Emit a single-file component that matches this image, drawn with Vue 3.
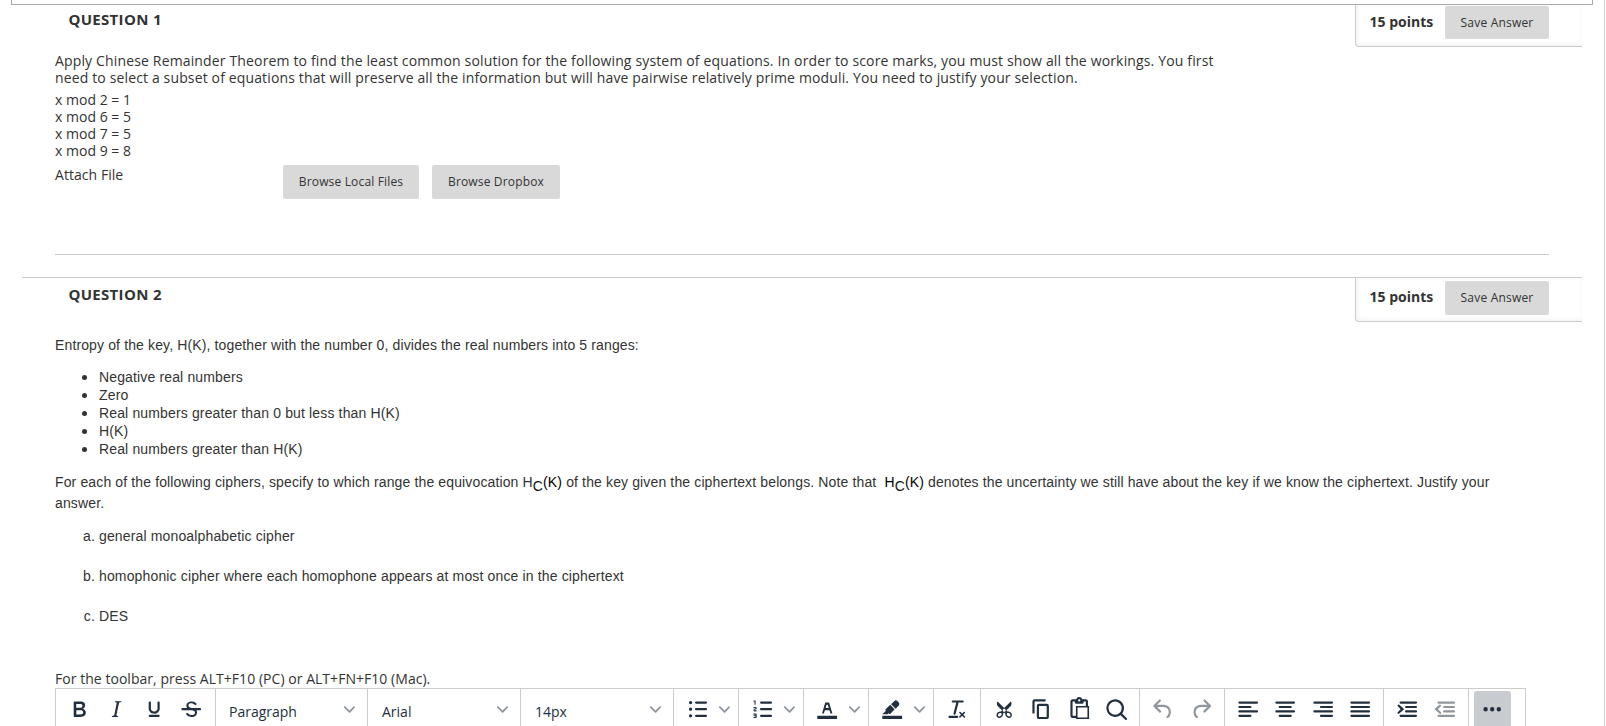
<script setup>
const ranges = ['Negative real numbers', 'Zero', 'Real numbers greater than 0 but less than H(K)', 'H(K)', 'Real numbers greater than H(K)']
const equations = ['x mod 2 = 1', 'x mod 6 = 5', 'x mod 7 = 5', 'x mod 9 = 8']
const ciphers = [
  ['a.', 'general monoalphabetic cipher'],
  ['b.', 'homophonic cipher where each homophone appears at most once in the ciphertext'],
  ['c.', 'DES'],
]

const bar = (x, y, w) => `M${x + 1} ${y}h${w - 2}a1 1 0 010 2h${2 - w}a1 1 0 010-2z`
const undo = 'M6.4 8H12c3.7 0 6.2 2 6.8 5.1.6 2.7-.4 5.6-2.3 6.8a1 1 0 01-1-1.8c1.1-.6 1.8-2.7 1.4-4.6-.5-2.1-2.1-3.5-4.9-3.5H6.4l3.3 3.3a1 1 0 11-1.4 1.4l-5-5a1 1 0 010-1.4l5-5a1 1 0 011.4 1.4L6.4 8z'
const icons = {
  bold: 'M7.8 19c-.3 0-.5 0-.6-.2l-.2-.5V5.7c0-.2 0-.4.2-.5l.6-.2h5c1.5 0 2.7.3 3.5 1 .7.6 1.1 1.4 1.1 2.5a3 3 0 01-.6 1.9c-.4.6-1 1-1.6 1.2.4.1.9.3 1.3.6s.8.7 1 1.2c.4.4.5 1 .5 1.6 0 1.3-.4 2.3-1.3 3-.8.7-2.1 1-3.8 1H7.8zm5-8.3c.6 0 1.2-.1 1.6-.5.4-.3.6-.7.6-1.3 0-1.1-.8-1.7-2.3-1.7H9.3v3.5h3.4zm.5 6c.7 0 1.3-.1 1.7-.4.4-.4.6-.9.6-1.5s-.2-1-.7-1.4c-.4-.3-1-.4-2-.4H9.4v3.8h4z',
  italic: 'M16.7 4.7l-.1.9h-.3c-.6 0-1 0-1.4.3-.3.3-.4.6-.5 1.1l-2.1 9.8v.6c0 .5.4.8 1.4.8h.2l-.2.8H8l.2-.8h.2c1.1 0 1.8-.5 2-1.5l2-9.8.1-.5c0-.6-.4-.8-1.4-.8h-.3l.2-.9h5.8z',
  underline: 'M16 5c.6 0 1 .4 1 1v5.5a4 4 0 01-.4 1.8l-1 1.4a5.3 5.3 0 01-5.5 1 5 5 0 01-1.6-1c-.5-.4-.8-.9-1.1-1.4a4 4 0 01-.4-1.8V6c0-.6.4-1 1-1s1 .4 1 1v5.5c0 .3 0 .6.2 1l.6.7a3.3 3.3 0 002.2.8 3.4 3.4 0 002.2-.8c.3-.2.4-.5.6-.8l.2-.9V6c0-.6.4-1 1-1zM8 17h8c.6 0 1 .4 1 1s-.4 1-1 1H8a1 1 0 010-2z',
  strike: 'M15.6 8.5c-.5-.7-1-1.1-1.3-1.3-.6-.4-1.3-.6-2-.6-2.7 0-2.8 1.7-2.8 2.1 0 1.6 1.8 2 3.2 2.3 4.4.9 4.6 2.8 4.6 3.9 0 1.4-.7 4.1-5 4.1A6.2 6.2 0 017 16.4l1.5-1.1c.4.6 1.6 2 3.7 2 1.6 0 2.5-.4 3-1.2.4-.8.3-2-.8-2.6-.7-.4-1.6-.7-2.9-1-1-.2-3.9-.8-3.9-3.6C7.6 6 10.3 5 12.4 5c2.9 0 4.2 1.6 4.7 2.4l-1.5 1.1z',
  bullets: bar(10, 5, 11) + bar(10, 11, 11) + bar(10, 17, 11) + 'M4.5 6a1.5 1.5 0 103 0 1.5 1.5 0 10-3 0zM4.5 12a1.5 1.5 0 103 0 1.5 1.5 0 10-3 0zM4.5 18a1.5 1.5 0 103 0 1.5 1.5 0 10-3 0z',
  numbers: bar(10, 5, 11) + bar(10, 11, 11) + bar(10, 17, 11) + 'M6 4v3.5c0 .3-.2.5-.5.5a.5.5 0 01-.5-.5V5h-.5a.5.5 0 010-1H6zm-1 8.8l.2.2h1.3c.3 0 .5.2.5.5s-.2.5-.5.5H4.9a1 1 0 01-.9-1V13c0-.4.3-.8.6-1l1.2-.4.2-.3a.2.2 0 00-.2-.2H4.5a.5.5 0 01-.5-.5c0-.3.2-.5.5-.5h1.6c.5 0 .9.4.9 1v.1c0 .4-.3.8-.6 1l-1.2.4-.2.3zM7 17v2c0 .6-.4 1-1 1H4.5a.5.5 0 010-1h1.2c.2 0 .3-.1.3-.3 0-.2-.1-.3-.3-.3H4.4a.4.4 0 110-.8h1.3c.2 0 .3-.1.3-.3 0-.2-.1-.3-.3-.3H4.5a.5.5 0 110-1H6c.6 0 1 .4 1 1z',
  color: 'M3 18h18v3H3zM8.7 16h-.8a.5.5 0 01-.5-.6l2.7-9c.1-.3.3-.4.5-.4h2.8c.2 0 .4.1.5.4l2.7 9a.5.5 0 01-.5.6h-.8a.5.5 0 01-.4-.4l-.7-2.2c0-.3-.3-.4-.5-.4h-3.4c-.2 0-.4.1-.5.4l-.7 2.2c0 .3-.2.4-.4.4zm2.6-7.6l-.6 2a.5.5 0 00.5.6h1.6a.5.5 0 00.5-.6l-.6-2c0-.3-.3-.4-.5-.4h-.4c-.2 0-.4.1-.5.4z',
  highlight: 'M3 18h18v3H3zM7.7 16.7H3l3.3-3.3-.7-.8L10.2 8l4 4.1-4 4.2c-.2.2-.6.2-.8 0l-.6-.7-1.1 1.1zm5-7.5L11 7.4l3-2.9a2 2 0 012.6 0L18 6c.7.7.7 2 0 2.7l-2.9 2.9-1.8-1.8z',
  clear: 'M13.2 6a1 1 0 010 .2l-2.6 10a1 1 0 01-1 .8h-.2a.8.8 0 01-.8-1l2.6-10H8a1 1 0 110-2h9a1 1 0 010 2h-3.8zM5 18h7a1 1 0 010 2H5a1 1 0 010-2zm13 1.5L16.5 18 15 19.5a.7.7 0 01-1-1l1.5-1.5-1.5-1.5a.7.7 0 011-1l1.5 1.5 1.5-1.5a.7.7 0 011 1L17.5 17l1.5 1.5a.7.7 0 01-1 1z',
  cut: 'M18 15c.6.7 1 1.4 1 2.3 0 .8-.2 1.5-.7 2l-.8.5-1 .2c-.4 0-.8 0-1.2-.3a3.9 3.9 0 01-2.1-2.2c-.2-.5-.3-1-.2-1.5l-1-1-1 1c0 .5 0 1-.2 1.5-.1.5-.4 1-.9 1.4-.3.4-.7.6-1.2.8l-1.2.3c-.4 0-.7 0-1-.2-.3 0-.6-.3-.8-.5-.5-.5-.8-1.2-.7-2 0-.9.4-1.6 1-2.2A3.7 3.7 0 018.6 14H9l1-1-4-4-.5-1a3.3 3.3 0 010-2c0-.4.3-.7.5-1l6 6 6-6 .5 1a3.3 3.3 0 010 2c0 .4-.3.7-.5 1l-4 4 1 1h.5c.4 0 .8 0 1.2.3.5.2.9.4 1.2.8zm-8.5 2.2l.1-.4v-.3-.4a1 1 0 00-.2-.5 1 1 0 00-.4-.2 1.6 1.6 0 00-.8 0 2.6 2.6 0 00-.8.3 2.5 2.5 0 00-.9 1.1l-.1.4v.7l.2.5.5.2h.7a2.5 2.5 0 00.8-.3 2.8 2.8 0 001-1zm2.5-2.8c.4 0 .7-.1 1-.4.3-.3.4-.6.4-1s-.1-.7-.4-1c-.3-.3-.6-.4-1-.4s-.7.1-1 .4c-.3.3-.4.6-.4 1s.1.7.4 1c.3.3.6.4 1 .4zm5.4 4l.2-.5v-.4-.3a2.6 2.6 0 00-.3-.8 2.4 2.4 0 00-.7-.7 2.5 2.5 0 00-.8-.3 1.5 1.5 0 00-.8 0 1 1 0 00-.4.2 1 1 0 00-.2.5 1.5 1.5 0 000 .7v.4l.3.4.3.4a2.8 2.8 0 00.8.5l.4.1h.7l.5-.2z',
  copy: 'M16 3H6a2 2 0 00-2 2v11h2V5h10V3zm1 4a2 2 0 012 2v10a2 2 0 01-2 2h-7a2 2 0 01-2-2V9c0-1.2.9-2 2-2h7zm0 12V9h-7v10h7z',
  paste: 'M18 9V5h-2v1c0 .6-.4 1-1 1H9a1 1 0 01-1-1V5H6v13h3V9h9zM9 20H6a2 2 0 01-2-2V5c0-1.1.9-2 2-2h3.2A3 3 0 0112 1a3 3 0 012.8 2H18a2 2 0 012 2v4h1v12H9v-1zm1.5-9.5v9h9v-9h-9zM12 3a1 1 0 00-1 1c0 .5.4 1 1 1s1-.5 1-1-.4-1-1-1z',
  search: 'M16 17.3a8 8 0 111.4-1.4l4.3 4.4a1 1 0 01-1.4 1.4l-4.4-4.3zm-5-.3a6 6 0 100-12 6 6 0 000 12z',
  undo,
  redo: undo,
  left: bar(3, 5, 18) + bar(3, 9, 12) + bar(3, 13, 18) + bar(3, 17, 12),
  center: bar(3, 5, 18) + bar(6, 9, 12) + bar(3, 13, 18) + bar(6, 17, 12),
  right: bar(3, 5, 18) + bar(9, 9, 12) + bar(3, 13, 18) + bar(9, 17, 12),
  justify: bar(3, 5, 18) + bar(3, 9, 18) + bar(3, 13, 18) + bar(3, 17, 18),
  indent: bar(5, 5, 16) + bar(10, 9, 11) + bar(10, 13, 11) + bar(5, 17, 16) + 'M3.3 14.8a1 1 0 001.2 1.4l4-3.4a1 1 0 000-1.6l-4-3.4a1 1 0 00-1.2 1.4L6 12z',
  outdent: bar(5, 5, 16) + bar(10, 9, 11) + bar(10, 13, 11) + bar(5, 17, 16) + 'M8.2 14.8a1 1 0 01-1.2 1.4l-4-3.4a1 1 0 010-1.6l4-3.4a1 1 0 011.2 1.4L5.4 12z',
  more: 'M4 12a2 2 0 104 0 2 2 0 10-4 0zM10 12a2 2 0 104 0 2 2 0 10-4 0zM16 12a2 2 0 104 0 2 2 0 10-4 0z',
}
const groups = [
  { kind: 'icons', names: ['bold', 'italic', 'underline', 'strike'] },
  { kind: 'select', label: 'Paragraph' },
  { kind: 'select', label: 'Arial' },
  { kind: 'select', label: '14px' },
  { kind: 'split', names: ['bullets'] },
  { kind: 'split', names: ['numbers'] },
  { kind: 'split', names: ['color'] },
  { kind: 'split', names: ['highlight'] },
  { kind: 'icons', names: ['clear'] },
  { kind: 'icons', names: ['cut', 'copy', 'paste', 'search'] },
  { kind: 'icons', names: ['undo', 'redo'] },
  { kind: 'icons', names: ['left', 'center', 'right', 'justify'] },
  { kind: 'icons', names: ['indent', 'outdent'] },
  { kind: 'icons', names: ['more'] },
]
const disabled = ['undo', 'redo', 'outdent']
</script>

<template>
  <main class="page">
    <div class="topbox"></div>
    <section class="question first">
      <header class="head">
        <h3>QUESTION 1</h3>
        <div class="points"><strong>15 points</strong><button class="btn save">Save Answer</button></div>
      </header>
      <div class="body">
        <p class="prompt"><span class="l1">Apply Chinese Remainder Theorem to find the least common solution for the following system of equations. In order to score marks, you must show all the workings. You first</span><br><span class="l2">need to select a subset of equations that will preserve all the information but will have pairwise relatively prime moduli. You need to justify your selection.</span></p>
        <div class="equations"><div v-for="e in equations" :key="e">{{ e }}</div></div>
        <div class="attach">
          <span class="label">Attach File</span>
          <button class="btn local">Browse Local Files</button>
          <button class="btn dropbox">Browse Dropbox</button>
        </div>
      </div>
    </section>
    <section class="question second">
      <header class="head">
        <h3>QUESTION 2</h3>
        <div class="points"><strong>15 points</strong><button class="btn save">Save Answer</button></div>
      </header>
      <div class="body arial">
        <p class="entropy">Entropy of the key, H(K), together with the number 0, divides the real numbers into 5 ranges:</p>
        <ul><li v-for="r in ranges" :key="r"><i class="dot"></i>{{ r }}</li></ul>
        <p class="each">For each of the following ciphers, specify to which range the equivocation H<b>C</b><em>(K)</em> of the key given the ciphertext belongs. Note that&nbsp; <em>H</em><b>C</b><em>(K)</em> denotes the uncertainty we still have about the key if we know the ciphertext. Justify your<br>answer.</p>
        <div class="ciphers">
          <div v-for="c in ciphers" :key="c[0]" class="cipher"><span>{{ c[0] }}</span>{{ c[1] }}</div>
        </div>
      </div>
      <p class="hint">For the toolbar, press ALT+F10 (PC) or ALT+FN+F10 (Mac).</p>
      <div class="toolbar">
        <div v-for="(g, i) in groups" :key="i" class="group" :class="g.kind">
          <span v-if="g.label" class="value">{{ g.label }}</span>
          <span v-for="n in g.names" :key="n" class="tool" :class="[n, { off: disabled.includes(n) }]">
            <svg viewBox="0 0 24 24"><path fill-rule="evenodd" :d="icons[n]" /><rect v-if="n === 'strike'" x="3" y="11" width="18" height="2" rx="1" /></svg>
          </span>
          <svg v-if="g.kind !== 'icons'" class="chev" viewBox="0 0 10 10"><path d="M8.7 2.2c.3-.3.8-.3 1 0 .4.4.4.9 0 1.2L5.7 7.8c-.3.3-.9.3-1.2 0L.2 3.4a.8.8 0 010-1.2c.3-.3.8-.3 1.1 0L5 6l3.7-3.8z" /></svg>
        </div>
      </div>
    </section>
  </main>
</template>

<style>
html, body { overflow: hidden; background: #fff; }
</style>

<style scoped>
* { box-sizing: border-box; }
.page { width: 1605px; height: 726px; overflow: hidden; border-right: 1px solid #ccc; font: 14px/17px "Open Sans", sans-serif; color: #333; }
p, h3, ul { margin: 0; padding: 0; }
.topbox { height: 5px; margin-left: 11px; width: 1582px; border: 1px solid #aaa; border-top: 0; }
.question { margin-left: 22px; width: 1560px; }
.first { height: 272px; }
.second { border-top: 1px solid #ccc; }
.head { display: flex; justify-content: space-between; height: 42px; }
h3 { margin: 4px 0 0 46.4px; font-size: 15px; line-height: 20px; font-weight: 700; letter-spacing: .32px; }
.second h3 { margin-top: 6px; }
.points { display: flex; width: 227px; height: 42px; padding: 1px 0 0 13.5px; border: 1px solid #ccc; border-width: 0 0 1px 1px; border-bottom-left-radius: 4px; box-shadow: inset 1px -1px 4px #f0f0f0; }
.second .points { height: 44px; padding-top: 3px; }
.points strong { width: 75.5px; line-height: 31px; font-weight: 700; }
.btn { display: block; border: 0; border-radius: 2px; padding: 0; height: 34px; background: #d9d9d9; color: #333; font: 12px/34px "Open Sans", sans-serif; letter-spacing: .16px; text-align: center; }
.save { width: 104px; height: 33px; letter-spacing: .2px; }
.second .save { height: 34px; }
.body { margin-left: 33px; width: 1494px; }
.first .body { height: 208px; border-bottom: 1px solid #ccc; padding-top: 5px; }
.prompt { white-space: nowrap; }
.l1 { letter-spacing: .151px; }
.l2 { letter-spacing: .14px; }
.equations { margin-top: 5px; letter-spacing: .02px; }
.attach { display: flex; margin-top: 7px; }
.label { width: 228px; letter-spacing: .05px; }
.attach .btn { margin-top: -1px; }
.local { width: 136px; }
.dropbox { width: 128px; margin-left: 13px; }
.arial { font-family: "Liberation Sans", Arial, sans-serif; white-space: nowrap; padding-top: 16px; letter-spacing: .145px; }
.entropy { line-height: 18px; letter-spacing: .131px; }
ul { list-style: none; margin-top: 14px; }
li { display: flex; align-items: center; height: 18px; padding-left: 27px; }
.dot { width: 5px; height: 5px; border-radius: 50%; background: #333; margin-right: 12px; }
.each { margin-top: 14px; line-height: 21px; letter-spacing: .133px; }
.each b { font-weight: 400; color: #111; position: relative; top: 4px; }
.each em { font-style: normal; color: #000; }
.ciphers { margin-top: 12px; }
.cipher { display: flex; height: 40px; line-height: 21px; }
.cipher span { width: 44px; text-align: right; padding-right: 4px; }
.hint { margin: 24px 0 1px 33px; height: 17px; letter-spacing: .04px; }
.toolbar { display: flex; width: 1471px; height: 48px; margin-left: 33px; border: 1px solid #ccc; fill: #222f3e; }
.group { display: flex; align-items: flex-start; padding: 2px 0 0 4.4px; border-right: 1px solid #ccc; flex: none; }
.group:last-child { border-right: 0; padding-left: 4.8px; }
.icons { padding-right: 4.1px; }
.group:first-child { width: 160px; }
.tool { width: 37.5px; height: 37px; display: flex; align-items: center; justify-content: center; flex: none; }
.tool svg { width: 26.4px; height: 26.4px; }
.select { width: 153px; padding: 0 12px 2px 14px; align-items: center; height: 47px; justify-content: space-between; color: #222f3e; }
.group:nth-child(2) { width: 152px; padding-left: 13px; }
.select .chev { margin-top: -4px; }
.chev { width: 11px; height: 11px; fill: #222f3e; opacity: .5; flex: none; }
.split { width: 65px; padding-left: 4px; }
.split .chev { margin: 13px 0 0 3.4px; }
.off { opacity: .5; }
.redo svg { transform: scaleX(-1); }
.more { background: #c8cbcf; border-radius: 3px; }
</style>
